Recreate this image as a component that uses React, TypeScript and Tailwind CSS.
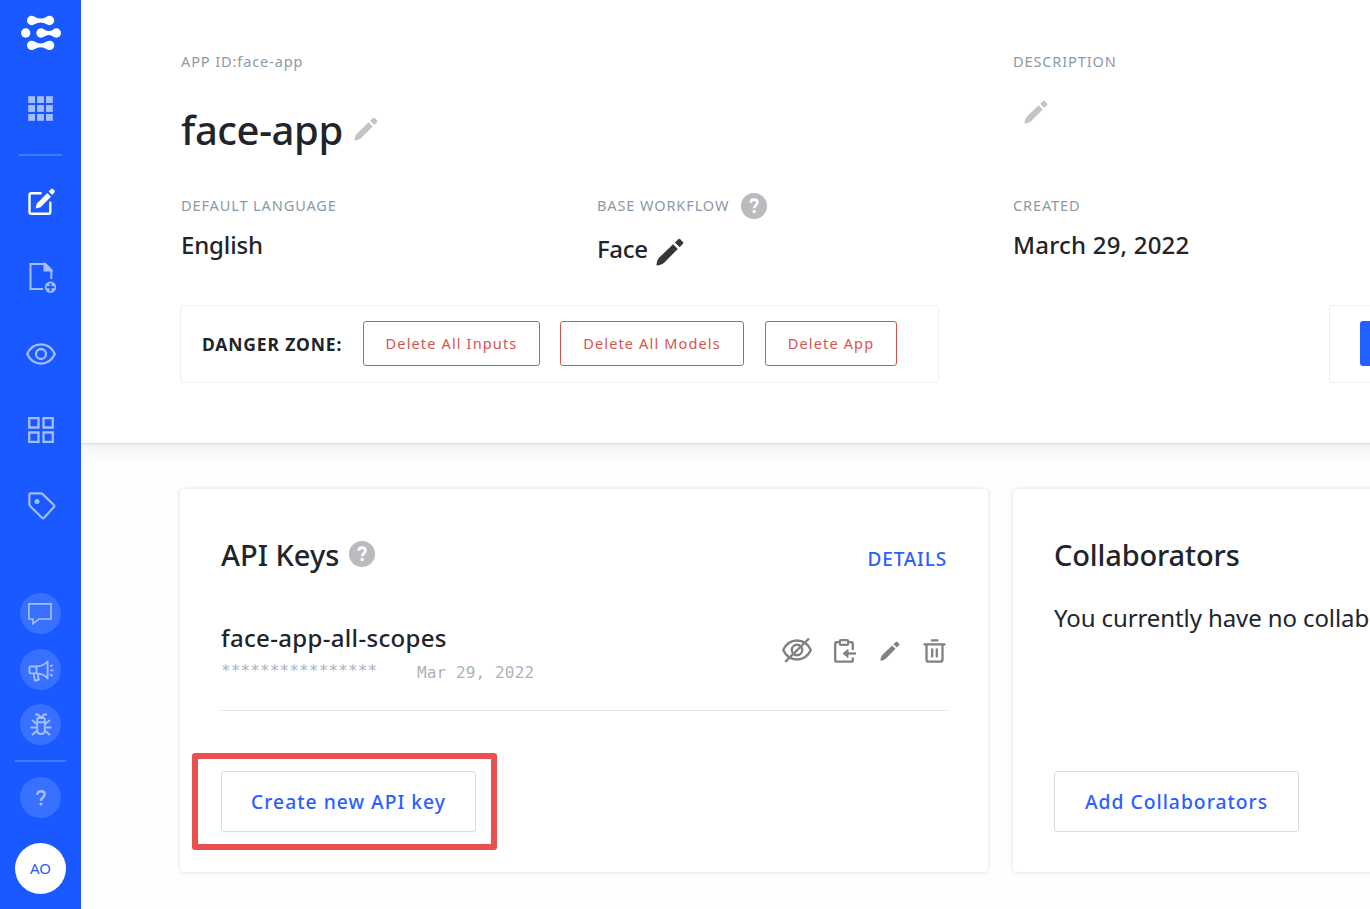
import React from "react";

const Pencil = ({ className }: { className: string }) => (
  <svg viewBox="0 0 24 24" fill="currentColor" className={className}>
    <path d="M.4 23.600C.6 20.600 1.400 18.400 2.800 16.800L14.600 5.300 18.700 9.400 7.200 20.900C5.600 22.400 3.400 23.200.4 23.600Z" />
    <path d="M16.200 3.800L19.200 1Q19.900.4 20.600 1L23.100 3.500Q23.700 4.200 23.100 4.900L20.300 7.900Z" />
  </svg>
);

const Help = ({ className }: { className: string }) => (
  <svg viewBox="0 0 26 26" className={className}>
    <circle cx="13" cy="13" r="13" fill="#bbbbbf" />
    <path d="M9.700 9.800C9.800 7.600 11.200 6.600 13 6.600c2 0 3.400 1.200 3.400 2.900 0 2.600-3.200 2.800-3.200 5.800" fill="none" stroke="#fff" strokeWidth="2.700" />
    <circle cx="13.200" cy="18.500" r="1.700" fill="#fff" />
  </svg>
);

const Logo = () => (
  <svg viewBox="0 0 40 36" fill="#fff" className="h-9 w-10">
    <circle cx="10.700" cy="5.500" r="4.700" />
    <circle cx="28.500" cy="5.500" r="4.700" />
    <path d="M13.500 1.700Q19.600 5.500 25.700 1.700V9.300Q19.600 5.500 13.500 9.300Z" />
    <circle cx="4.700" cy="18" r="4.700" />
    <circle cx="20" cy="18" r="4.700" />
    <circle cx="35.300" cy="18" r="4.700" />
    <path d="M22.800 14.200Q27.700 18 32.600 14.200V21.800Q27.700 18 22.800 21.800Z" />
    <circle cx="10.700" cy="30.400" r="4.700" />
    <circle cx="28.500" cy="30.400" r="4.700" />
    <path d="M13.500 26.600Q19.600 30.400 25.700 26.600V34.200Q19.600 30.400 13.500 34.200Z" />
  </svg>
);

const Sidebar = () => (
  <aside className="relative z-10 flex h-[909px] w-[81px] shrink-0 flex-col items-center bg-[#1959ff] text-[#a3bdff]">
    <div className="mt-[15px] h-9"><Logo /></div>
    <svg viewBox="0 0 25 25" fill="currentColor" className="mt-[45px] size-[25px]">
      {[0.2, 9.1, 18].map((y) => [0.2, 9.1, 18].map((x) => <rect key={`${x}-${y}`} x={x} y={y} width="6.800" height="6.800" />))}
    </svg>
    <div className="mt-[33px] h-[2px] w-[43px] bg-[#4678fb]" />
    <svg viewBox="0 0 30 30" fill="none" stroke="#fff" strokeWidth="2.400" strokeLinecap="round" className="mt-[31px] size-[30px]">
      <path d="M14.700 6.200H5.300Q3.500 6.200 3.500 8V25Q3.500 26.800 5.300 26.800H22.500Q24.300 26.800 24.300 25V15.800" />
      <path d="M9.500 21.400L10.900 16.500 21.300 6 25 9.700 14.500 20.200Z" fill="#fff" stroke="none" />
      <path d="M22.600 4.600L25.200 1.900Q26 1.200 26.800 1.900L28.500 3.600Q29.200 4.400 28.500 5.200L26.100 8Z" fill="#fff" stroke="none" />
    </svg>
    <svg viewBox="0 0 30 32" fill="none" stroke="currentColor" strokeWidth="2" className="mt-[44px] h-8 w-[30px]">
      <path d="M17.200 28H4.500V3H19.500L25.300 9V18" />
      <path d="M18.500 3V9.500H25Z" fill="currentColor" />
      <circle cx="24.500" cy="26.300" r="5.700" fill="currentColor" stroke="none" />
      <path d="M24.500 22.300V30.300M20.500 26.300H28.500" stroke="#1959ff" strokeWidth="1.900" />
    </svg>
    <svg viewBox="0 0 30 22" fill="none" stroke="currentColor" strokeWidth="2.300" className="mt-[50px] h-[22px] w-[30px]">
      <path d="M1.200 11C4 5 9 1.400 15 1.400S26 5 28.800 11C26 17 21 20.600 15 20.600S4 17 1.200 11Z" strokeLinejoin="round" />
      <circle cx="15" cy="11" r="5" />
    </svg>
    <svg viewBox="0 0 26 26" fill="none" stroke="currentColor" strokeWidth="2.300" className="mt-[52px] size-[26px]">
      <path d="M1.200 1.200h9.300v9.300h-9.300zM15.500 1.200h9.300v9.300h-9.300zM1.200 15.500h9.300v9.300h-9.300zM15.500 15.500h9.300v9.300h-9.300z" />
    </svg>
    <svg viewBox="0 0 28 28" fill="none" stroke="currentColor" strokeWidth="2.200" strokeLinejoin="round" className="relative left-[1px] mt-[49px] size-7">
      <path d="M1.400 2.400Q1.400 1.400 2.400 1.400H13Q14 1.400 14.700 2.100L26 13.300Q26.800 14.100 26 14.900L16 25.800Q15 26.800 14 25.800L2.100 14Q1.400 13.300 1.400 12.300Z" />
      <circle cx="9" cy="9.500" r="2.500" fill="currentColor" stroke="none" />
    </svg>
    <div className="mt-[73px] flex flex-col">
      <div className="flex size-[41px] items-center justify-center rounded-full bg-[#3870ff]">
        <svg viewBox="0 0 24 22" fill="none" stroke="currentColor" strokeWidth="1.700" className="relative -left-[1px] h-[22px] w-6">
          <path d="M.9.900H23V16H11L5 20.600V16H.9Z" />
        </svg>
      </div>
      <div className="mt-[15px] flex size-[41px] items-center justify-center rounded-full bg-[#3870ff]">
        <svg viewBox="0 0 26 22" fill="none" stroke="currentColor" strokeWidth="1.900" strokeLinejoin="round" className="relative top-[1px] h-[22px] w-[26px]">
          <path d="M8.500 6.500H3Q1.400 6.500 1.400 8V11.800Q1.400 13.400 3 13.400H8.500ZM8.500 6.500C13 6.300 17 4.500 19.600 1.500V18.500C17 15.300 13 13.600 8.500 13.400M5.500 13.500L7 20.600 10.800 19.800 9.500 13.500M22 6.500L24.800 5M22.200 10.400H25.600M22 14.300L24.800 15.800" />
        </svg>
      </div>
      <div className="mt-[14px] flex size-[41px] items-center justify-center rounded-full bg-[#3870ff]">
        <svg viewBox="0 0 22 24" fill="none" stroke="currentColor" strokeWidth="2" className="relative -top-[1px] h-6 w-[22px]">
          <path d="M7.200 10.300H14.800V17.500Q14.800 22 11 22T7.200 17.500ZM7.200 10.300V7.500Q7.200 6 8.700 6H13.300Q14.800 6 14.800 7.500V10.300M11 6L8 2.500H5M11 6L14 2.500H17M6.700 12L2 8M15.300 12L20 8M7 15.500H.5M15 15.500H21.500M7.200 18.500L2 23M14.800 18.500L20 23" />
        </svg>
      </div>
    </div>
    <div className="mt-[15px] h-[2px] w-[51px] bg-[#4678fb]" />
    <div className="mt-[15px] flex size-[41px] items-center justify-center rounded-full bg-[#3870ff]">
      <svg viewBox="0 0 10 16" fill="none" stroke="currentColor" strokeWidth="2.500" className="h-4 w-[10px]">
        <path d="M1.300 4.800C1.300 2.500 3 1.300 5 1.300S8.700 2.500 8.700 4.400C8.700 7.200 5 7.400 5 11" />
        <circle cx="5" cy="14" r="1.600" fill="currentColor" stroke="none" />
      </svg>
    </div>
    <div className="mt-[25px] flex size-[51px] items-center justify-center rounded-full bg-white text-[15px] tracking-[-0.1px] text-[#2b5cf0]">AO</div>
  </aside>
);

const label = "relative -top-px block whitespace-nowrap text-[14.5px] leading-5 font-normal tracking-[0.9px] text-[#8a9aa8]";
const value = "whitespace-nowrap text-[24px] leading-8 font-medium text-[#212529]";
const dangerButton = "-mt-[2px] flex h-[45px] items-center justify-center rounded-[3px] border border-[#d9534f] bg-white pt-[2px] whitespace-nowrap text-[14.5px] font-normal tracking-[1.15px] text-[#d9534f]";

const Header = () => (
  <header className="relative -mr-10 h-[443px] shrink-0 bg-white pt-[52px] pr-10 pl-[100px] shadow-[0_1px_2px_rgba(0,0,0,0.13),0_4px_20px_rgba(33,60,50,0.09)]">
    <div className="flex h-[144px]">
      <div className="w-[832px]">
        <span className={label}>APP ID:face-app</span>
        <div className="mt-[30px] flex h-14 items-center">
          <h1 className="w-[173px] whitespace-nowrap text-[40px] font-medium tracking-[-0.4px] text-[#212529]">face-app</h1>
          <Pencil className="relative -top-px size-6 text-[#c4c4c4]" />
        </div>
      </div>
      <div>
        <span className={label}>DESCRIPTION</span>
        <Pencil className="mt-[28px] ml-[11px] size-6 text-[#c4c4c4]" />
      </div>
    </div>
    <div className="flex h-[109px]">
      <div className="w-[416px]">
        <span className={label}>DEFAULT LANGUAGE</span>
        <p className={`${value} mt-[13px] tracking-[-0.15px]`}>English</p>
      </div>
      <div className="w-[416px]">
        <div className="flex h-5 items-center">
          <span className={`${label} w-[144px]`}>BASE WORKFLOW</span>
          <Help className="size-[26px]" />
        </div>
        <div className="mt-[17px] flex h-8 items-center">
          <p className={`${value} w-[59px] tracking-[-0.3px]`}>Face</p>
          <Pencil className="relative top-[3px] size-7 text-[#35353a]" />
        </div>
      </div>
      <div>
        <span className={label}>CREATED</span>
        <p className={`${value} mt-[13px] tracking-[0.2px]`}>March 29, 2022</p>
      </div>
    </div>
    <div className="-ml-px flex h-[78px] justify-between">
      <div className="flex w-[759px] items-center rounded-[3px] border border-[#f0f0f1] pl-[21px]">
        <strong className="w-[161px] whitespace-nowrap text-[17.5px] font-bold tracking-[0.85px] text-[#212529]">DANGER ZONE:</strong>
        <button className={`${dangerButton} w-[177px]`}>Delete All Inputs</button>
        <button className={`${dangerButton} ml-5 w-[184px]`}>Delete All Models</button>
        <button className={`${dangerButton} ml-[21px] w-[132px]`}>Delete App</button>
      </div>
      <div className="flex w-[41px] items-center justify-end rounded-l-[3px] border border-r-0 border-[#f0f0f1]">
        <div className="-mt-[2px] h-[45px] w-[10px] rounded-l-[3px] bg-[#2260ff]" />
      </div>
    </div>
  </header>
);

const card = "h-[383px] shrink-0 rounded-[4px] bg-white px-[41px] pt-[45px] shadow-[0_0_4px_rgba(0,0,0,0.14)]";
const cardTitle = "whitespace-nowrap text-[29px] leading-10 font-medium text-[#212529]";
const outline = "flex h-[61px] items-center justify-center rounded-[3px] border border-[#d8dadd] bg-white pt-[2px] whitespace-nowrap text-[19.3px] font-medium tracking-[1px] text-[#2a60ff]";

const KeyActions = () => (
  <div className="flex items-center pr-px text-[#818181]">
    <svg viewBox="0 0 30 26" fill="none" stroke="currentColor" strokeWidth="2.400" className="h-[26px] w-[30px]">
      <path d="M1.200 13C4 7 9 3.500 15 3.500S26 7 28.800 13C26 19 21 22.500 15 22.500S4 19 1.200 13Z" strokeLinejoin="round" />
      <circle cx="15" cy="13" r="5.200" />
      <path d="M3.200 24.800L27 1.500" />
    </svg>
    <svg viewBox="0 0 22 24" fill="none" stroke="currentColor" strokeWidth="2.300" strokeLinejoin="round" className="relative top-[1px] ml-[22px] h-6 w-[22px]">
      <path d="M5 3.200H2.500Q1.200 3.200 1.200 4.500V21.200Q1.200 22.600 2.600 22.600H17.400Q18.800 22.600 18.800 21.200V18.500M18.800 11V4.500Q18.800 3.200 17.500 3.200H15" />
      <rect x="5.800" y="1.200" width="8.400" height="4.600" rx="1.200" />
      <path d="M13 14.500H22" />
      <path d="M9 14.500L14 10.500V18.500Z" fill="currentColor" strokeWidth="1" />
    </svg>
    <Pencil className="relative top-[1px] ml-[24px] size-5" />
    <svg viewBox="0 0 23 24" fill="none" stroke="currentColor" strokeWidth="2.300" strokeLinecap="round" className="relative top-[1px] ml-[23px] h-6 w-[23px]">
      <path d="M8.800 1.300H14.500M1.500 5.400H21.500M3.500 6V20.500Q3.500 22.700 5.700 22.700H17.300Q19.500 22.700 19.500 20.500V6M9.200 10.500V17.500M13.800 10.500V17.500" />
    </svg>
  </div>
);

export default function App() {
  return (
    <div className="flex h-[909px] w-[1370px] overflow-hidden bg-white font-['Noto_Sans','Open_Sans',sans-serif]">
      <Sidebar />
      <main className="flex w-[1289px] flex-col overflow-hidden bg-[#fefefe]">
        <Header />
        <div className="mt-[46px] flex gap-[25px] pl-[99px]">
          <section className={`${card} w-[808px]`}>
            <div className="flex h-[50px] justify-between">
              <div className="flex h-10 items-center">
                <h2 className={`${cardTitle} relative top-[1px] w-[128px]`}>API Keys</h2>
                <Help className="size-[26px]" />
              </div>
              <a className="mt-[10px] text-[19px] leading-[30px] font-medium tracking-[0.85px] text-[#2a60ff]">DETAILS</a>
            </div>
            <div className="mt-[26px] flex h-[101px] justify-between border-b border-[#e4e5e9]">
              <div>
                <h3 className="mt-[12px] text-[24px] leading-8 font-medium tracking-[0.33px] whitespace-nowrap text-[#212529]">face-app-all-scopes</h3>
                <div className="flex h-9 items-center font-['DejaVu_Sans_Mono',monospace] text-[16px] tracking-[0.13px] whitespace-nowrap text-[#a9b4bf]">
                  <span className="-mt-[3px] w-[196px]">****************</span>
                  <span className="mt-[2px]">Mar 29, 2022</span>
                </div>
              </div>
              <div className="mt-[27px] h-[26px]"><KeyActions /></div>
            </div>
            <div className="relative mt-[60px] w-[255px]">
              <div className="pointer-events-none absolute -top-[18px] -left-[29px] h-[97px] w-[305px] rounded-[3px] border-[6px] border-[#ea5050]" />
              <button className={`${outline} w-[255px]`}>Create new API key</button>
            </div>
          </section>
          <section className={`${card} w-[808px]`}>
            <h2 className={`${cardTitle} relative top-[1px] tracking-[-0.15px]`}>Collaborators</h2>
            <p className="mt-[26px] h-[152px] text-[24px] leading-9 tracking-[-0.1px] whitespace-nowrap text-[#212529]">You currently have no collab</p>
            <button className={`${outline} mt-[19px] w-[245px]`}>Add Collaborators</button>
          </section>
        </div>
      </main>
    </div>
  );
}
